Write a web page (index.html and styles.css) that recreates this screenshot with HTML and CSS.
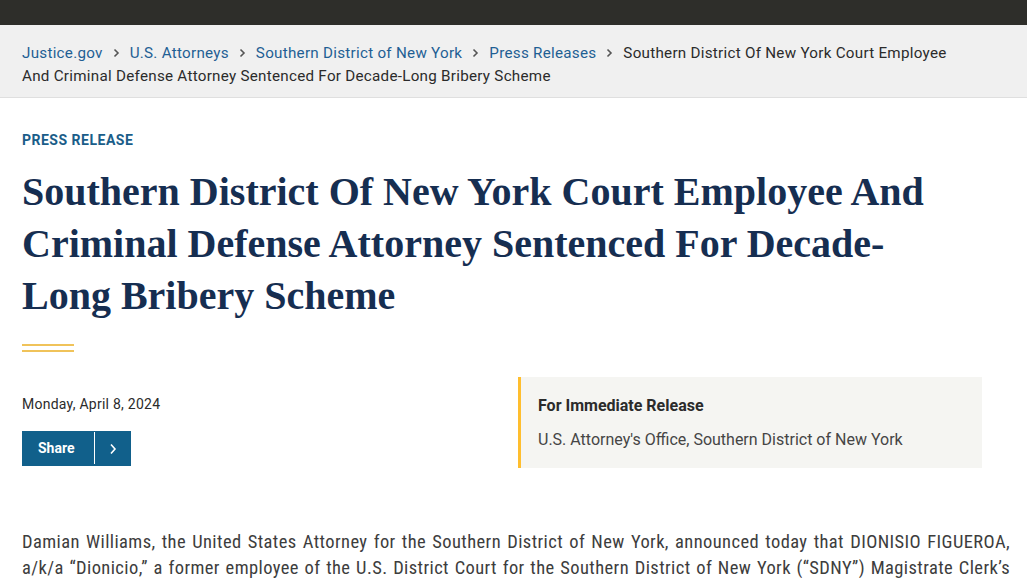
FILE: index.html
```html
<!DOCTYPE html>
<html lang="en">
<head>
<meta charset="utf-8">
<title>Press Release</title>
<link rel="stylesheet" href="styles.css">
</head>
<body>
<div class="topbar"></div>
<nav class="crumbs">
  <div class="crumbs-inner">
    <a href="#">Justice.gov</a><span class="sep"><svg width="7" height="10" viewBox="0 0 7 10"><path d="M1.5 1.5 L5 5 L1.5 8.5" fill="none" stroke="#555" stroke-width="1.6"/></svg></span><a href="#">U.S. Attorneys</a><span class="sep"><svg width="7" height="10" viewBox="0 0 7 10"><path d="M1.5 1.5 L5 5 L1.5 8.5" fill="none" stroke="#555" stroke-width="1.6"/></svg></span><a href="#">Southern District of New York</a><span class="sep"><svg width="7" height="10" viewBox="0 0 7 10"><path d="M1.5 1.5 L5 5 L1.5 8.5" fill="none" stroke="#555" stroke-width="1.6"/></svg></span><a href="#">Press Releases</a><span class="sep"><svg width="7" height="10" viewBox="0 0 7 10"><path d="M1.5 1.5 L5 5 L1.5 8.5" fill="none" stroke="#555" stroke-width="1.6"/></svg></span><span class="current">Southern District Of New York Court Employee And Criminal Defense Attorney Sentenced For Decade-Long Bribery Scheme</span>
  </div>
</nav>
<main class="main">
  <div class="kicker">PRESS RELEASE</div>
  <h1 class="title">Southern District Of New York Court Employee And Criminal Defense Attorney Sentenced For Decade-Long Bribery Scheme</h1>
  <div class="rule"></div>
  <div class="meta">
    <div class="meta-left">
      <div class="date">Monday, April 8, 2024</div>
      <button class="share"><span class="share-label">Share</span><span class="share-icon"><svg width="8" height="12" viewBox="0 0 8 12"><path d="M2 1.5 L6 6 L2 10.5" fill="none" stroke="#fff" stroke-width="1.6"/></svg></span></button>
    </div>
    <aside class="release">
      <div class="release-title">For Immediate Release</div>
      <div class="release-office">U.S. Attorney's Office, Southern District of New York</div>
    </aside>
  </div>
  <p class="body">Damian Williams, the United States Attorney for the Southern District of New York, announced today that DIONISIO FIGUEROA, a/k/a “Dionicio,” a former employee of the U.S. District Court for the Southern District of New York (“SDNY”) Magistrate Clerk’s Office, was sentenced today for his role in a decade-long bribery scheme.</p>
</main>
</body>
</html>
```
FILE: styles.css
```css
* { box-sizing: border-box; }
html, body { margin: 0; padding: 0; background: #fff; }
body { font-family: Roboto, "Open Sans", sans-serif; color: #1b1b1b; }
.topbar { height: 25px; background: #2e2e2a; }
.crumbs { background: #f0f0f0; border-bottom: 1px solid #dfdfdf; padding: 17px 22px 9px; }
.crumbs-inner { font-size: 15.2px; line-height: 23px; color: #2b2b2b; max-width: 950px; letter-spacing: 0.27px; }
.crumbs a { color: #1f5f94; text-decoration: none; }
.sep { display: inline-block; margin: 0 10px 0 10px; }
.sep svg { display: inline-block; }
.current { color: #2b2b2b; }
.main { padding: 0 22px; }
.kicker { margin-top: 32px; font-size: 14px; font-weight: 700; color: #1a5d89; line-height: 20px; letter-spacing: 0.5px; }
.title { margin: 16px 0 0; max-width: 940px; font-family: "Liberation Serif", "DejaVu Serif", serif; font-weight: 700; font-size: 40px; line-height: 52px; color: #162e51; }
.rule { margin-top: 22px; width: 52px; height: 8px; border-top: 2px solid #f0c35a; border-bottom: 2px solid #f0c35a; }
.meta { display: flex; justify-content: space-between; margin-top: 25px; width: 960px; }
.meta-left { padding-top: 18px; }
.date { font-size: 14px; line-height: 18px; color: #2b2b2b; letter-spacing: 0.25px; }
.share { margin-top: 18px; display: flex; align-items: stretch; height: 35px; padding: 0; border: 0; background: #11608b; color: #fff; font-family: inherit; cursor: pointer; }
.share-label { display: flex; align-items: center; padding: 0 19px 0 16px; font-size: 14px; font-weight: 700; border-right: 1px solid #fff; margin: 1px 0 2px; }
.share-icon { display: flex; align-items: center; justify-content: center; width: 36px; }
.release { width: 464px; background: #f5f5f2; border-left: 3px solid #ffbe2e; padding: 18px 17px 17px; }
.release-title { font-size: 16px; font-weight: 700; line-height: 22px; color: #2b2b2b; }
.release-office { margin-top: 12px; font-size: 16px; line-height: 22px; color: #454545; }
.body { margin: 61px 0 0; width: 988px; font-family: "Liberation Sans Narrow", "Roboto Condensed", Roboto, sans-serif; font-size: 18.5px; line-height: 26px; color: #3d3d3d; text-align: justify; letter-spacing: 0.4px; }
```
